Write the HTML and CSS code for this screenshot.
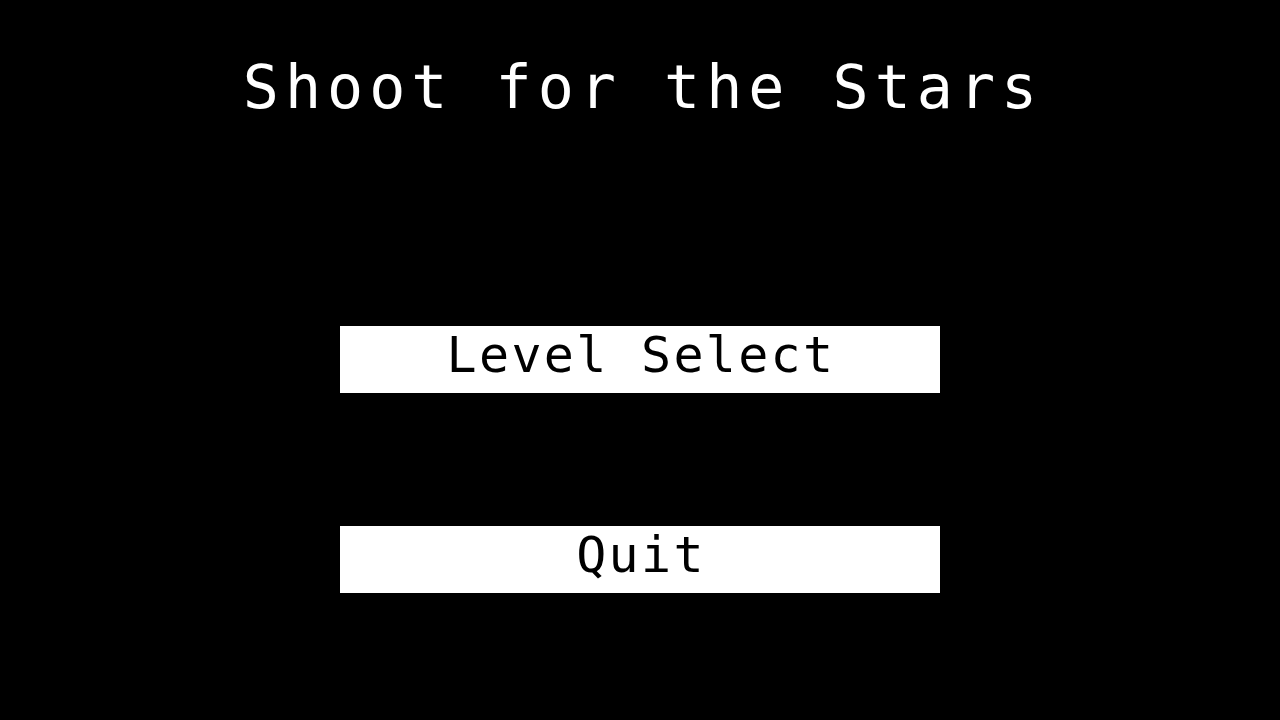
FILE: index.html
```html
<!DOCTYPE html>
<html lang="en">
<head>
    <meta charset="UTF-8">
    <meta name="viewport" content="width=device-width, initial-scale=1.0">
    <title>Shoot for the Stars</title>
    <link rel="stylesheet" href="styles.css">
</head>
<body>
<main class="menu">
    <h1 class="title">Shoot for the Stars</h1>
    <nav class="buttons">
        <button class="menu-button" type="button">Level Select</button>
        <button class="menu-button" type="button">Quit</button>
    </nav>
</main>
</body>
</html>
```

FILE: styles.css
```css
html, body {
    margin: 0;
    padding: 0;
    height: 100%;
}
body {
    background-color: #000;
    color: #fff;
    font-family: "DejaVu Sans Mono", "Liberation Mono", monospace;
}
.menu {
    display: flex;
    flex-direction: column;
    align-items: center;
    height: 100%;
}
.title {
    margin: 0;
    padding-top: 57px;
    padding-left: 6px;
    font-size: 60px;
    font-weight: normal;
    line-height: 1;
    letter-spacing: 6px;
}
.buttons {
    display: flex;
    flex-direction: column;
    gap: 133px;
    margin-top: 209px;
}
.menu-button {
    width: 600px;
    height: 67px;
    padding: 0 0 10px 2px;
    border: none;
    background-color: #fff;
    color: #000;
    font-family: inherit;
    font-size: 50px;
    line-height: 1;
    letter-spacing: 2.3px;
    cursor: pointer;
}
```
